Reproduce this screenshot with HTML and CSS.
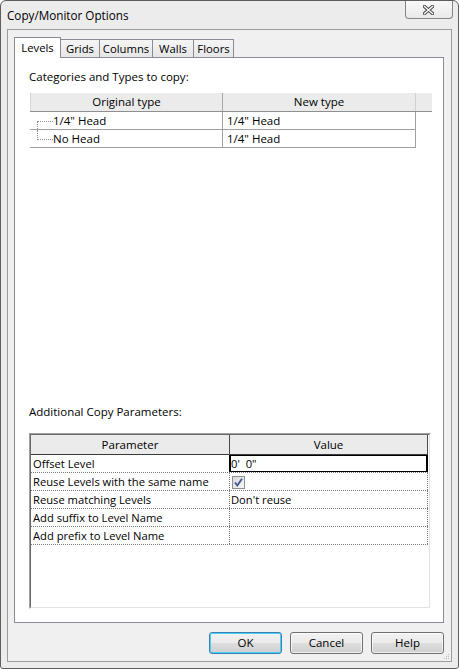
FILE: index.html
```html
<!DOCTYPE html>
<html>
<head>
<meta charset="utf-8">
<title>Copy/Monitor Options</title>
<link rel="stylesheet" href="styles.css">
</head>
<body>
<div class="window">
  <div class="titlebar">
    <span class="title">Copy/Monitor Options</span>
    <div class="close-btn">
      <svg width="11" height="10" viewBox="0 0 11 10">
        <path d="M1.5 1.5 L9.5 8.5 M9.5 1.5 L1.5 8.5" stroke="#4b4b4b" stroke-width="3.4" stroke-linecap="square" fill="none"/>
        <path d="M1.5 1.5 L9.5 8.5 M9.5 1.5 L1.5 8.5" stroke="#ffffff" stroke-width="1.3" stroke-linecap="square" fill="none"/>
      </svg>
    </div>
  </div>
  <div class="client">
    <div class="tabs">
      <div class="tab selected t-levels">Levels</div>
      <div class="tab t-grids">Grids</div>
      <div class="tab t-columns">Columns</div>
      <div class="tab t-walls">Walls</div>
      <div class="tab t-floors">Floors</div>
    </div>
    <div class="panel">
      <div class="label">Categories and Types to copy:</div>
      <div class="types">
        <div class="types-head">
          <div class="th th-orig">Original type</div>
          <div class="th th-new">New type</div>
          <div class="th th-fill"></div>
        </div>
        <div class="types-row">
          <div class="td td-orig"><span class="twig twig-first"></span><span class="tname">1/4" Head</span></div>
          <div class="td td-new">1/4" Head</div>
        </div>
        <div class="types-row">
          <div class="td td-orig"><span class="twig twig-last"></span><span class="tname">No Head</span></div>
          <div class="td td-new">1/4" Head</div>
        </div>
      </div>
      <div class="spacer"></div>
      <div class="label">Additional Copy Parameters:</div>
      <div class="grid">
        <div class="grid-inner">
          <div class="g-head">
            <div class="gh gh-param">Parameter</div>
            <div class="gh gh-value">Value</div>
          </div>
          <div class="g-row">
            <div class="gc gc-param focus-left">Offset Level</div>
            <div class="gc gc-value focus">0'&nbsp; 0"</div>
          </div>
          <div class="g-row">
            <div class="gc gc-param">Reuse Levels with the same name</div>
            <div class="gc gc-value">
              <span class="checkbox">
                <svg width="11" height="11" viewBox="0 0 11 11">
                  <path d="M2 5.5 L4.3 8.5 L9 1.8" stroke="#41558f" stroke-width="1.8" fill="none" stroke-linejoin="miter"/>
                </svg>
              </span>
            </div>
          </div>
          <div class="g-row">
            <div class="gc gc-param">Reuse matching Levels</div>
            <div class="gc gc-value">Don't reuse</div>
          </div>
          <div class="g-row">
            <div class="gc gc-param">Add suffix to Level Name</div>
            <div class="gc gc-value"></div>
          </div>
          <div class="g-row">
            <div class="gc gc-param">Add prefix to Level Name</div>
            <div class="gc gc-value"></div>
          </div>
        </div>
      </div>
    </div>
    <div class="buttons">
      <div class="btn btn-default">OK</div>
      <div class="btn">Cancel</div>
      <div class="btn">Help</div>
    </div>
    <svg class="grip" width="7" height="7" viewBox="0 0 7 7">
      <rect x="5" y="1" width="1" height="1" fill="#b9b9b9"/>
      <rect x="3" y="3" width="1" height="1" fill="#b9b9b9"/>
      <rect x="5" y="3" width="1" height="1" fill="#b9b9b9"/>
      <rect x="1" y="5" width="1" height="1" fill="#b9b9b9"/>
      <rect x="3" y="5" width="1" height="1" fill="#b9b9b9"/>
      <rect x="5" y="5" width="1" height="1" fill="#b9b9b9"/>
    </svg>
  </div>
</div>
</body>
</html>
```
FILE: styles.css
```css
* { box-sizing: border-box; }
html, body { margin: 0; padding: 0; }
body {
  width: 459px;
  height: 669px;
  overflow: hidden;
  background: #ffffff;
  font-family: "Open Sans", "Noto Sans", sans-serif;
  font-size: 11.5px;
  color: #000;
}
.window {
  width: 459px;
  height: 669px;
  border: 1px solid #5e5e5e;
  border-radius: 6px 6px 3px 3px;
  background: #ececec;
  display: flex;
  flex-direction: column;
}
.titlebar {
  height: 28px;
  flex: none;
  display: flex;
  align-items: flex-start;
}
.title {
  padding-left: 6px;
  margin-top: 6px;
  line-height: 16px;
  font-size: 11.7px;
}
.close-btn {
  margin-left: auto;
  margin-right: 5px;
  width: 48px;
  height: 18px;
  border: 1px solid #858585;
  border-top: none;
  border-radius: 0 0 4px 4px;
  background: linear-gradient(#f9f9f9, #e9e9e9);
  display: flex;
  align-items: center;
  justify-content: center;
  padding-right: 2px;
}
.client {
  flex: 1;
  margin: 0 6px 6px 6px;
  border: 1px solid #9c9c9c;
  background: #f0f0f0;
  padding: 7px 7px 7px 6px;
  display: flex;
  flex-direction: column;
  position: relative;
}
.tabs {
  display: flex;
  align-items: flex-end;
  height: 20px;
  flex: none;
}
.tab {
  height: 18px;
  border: 1px solid #898c95;
  border-bottom: none;
  background: linear-gradient(#f5f5f5, #e6e6e6);
  text-align: center;
  line-height: 17px;
  padding-top: 0;
  margin-left: -1px;
  font-size: 11.3px;
}
.tab.selected {
  height: 21px;
  margin-left: 0;
  margin-bottom: -1px;
  background: #ffffff;
  position: relative;
  z-index: 1;
  line-height: 16px;
  padding-top: 2px;
}
.t-levels { width: 47px; }
.t-grids { width: 40px; }
.t-columns { width: 54px; }
.t-walls { width: 42px; }
.t-floors { width: 41px; }
.panel {
  flex: 1;
  border: 1px solid #898c95;
  background: #ffffff;
  display: flex;
  flex-direction: column;
  padding: 11px 0 13px 14px;
}
.label {
  line-height: 16px;
  height: 16px;
}
.types {
  margin-top: 8px;
  margin-left: 1px;
  width: 402px;
}
.types-head {
  display: flex;
  height: 19px;
  border-bottom: 1px solid #8f8f8f;
  background: #ebebeb;
}
.th {
  line-height: 18px;
  text-align: center;
}
.th-orig {
  width: 193px;
  border-left: 1px solid #d9d9d9;
  border-right: 1px solid #a8a8a8;
}
.th-new {
  width: 193px;
  border-right: 1px solid #d0d0d0;
}
.th-fill { width: 16px; }
.types-row {
  display: flex;
  width: 386px;
  height: 18px;
  border-bottom: 1px solid #a0a0a0;
}
.td {
  height: 17px;
  line-height: 17px;
}
.td-orig {
  width: 193px;
  border-right: 1px solid #a0a0a0;
  display: flex;
  align-items: flex-start;
}
.td-new {
  width: 193px;
  border-right: 1px solid #a0a0a0;
  padding-left: 4px;
}
.twig {
  display: block;
  margin-left: 7px;
  width: 16px;
  flex: none;
}
.twig-first {
  margin-top: 9px;
  height: 8px;
  border-left: 1px dotted #8c8c8c;
  border-top: 1px dotted #8c8c8c;
}
.twig-last {
  height: 10px;
  border-left: 1px dotted #8c8c8c;
  border-bottom: 1px dotted #8c8c8c;
}
.tname { margin-left: 0; }
.spacer { flex: 1; }
.grid {
  margin-top: 13px;
  width: 402px;
  height: 176px;
  border: 1px solid;
  border-color: #a0a0a0 #ffffff #ffffff #a0a0a0;
}
.grid-inner {
  height: 100%;
  border: 1px solid;
  border-color: #696969 #e3e3e3 #e3e3e3 #696969;
  background: #ffffff;
}
.g-head {
  display: flex;
  height: 20px;
}
.gh {
  height: 20px;
  line-height: 19px;
  text-align: center;
  background: #ebebeb;
  border-bottom: 1px solid #3a3a3a;
  border-right: 1px solid #4a4a4a;
}
.gh-param { width: 199px; }
.gh-value { width: 198px; }
.g-row {
  display: flex;
  width: 397px;
  height: 18px;
  border-bottom: 1px dotted #7a7a7a;
}
.gc {
  height: 17px;
  line-height: 17px;
  font-size: 11.2px;
  white-space: nowrap;
  border-right: 1px dotted #7a7a7a;
}
.gc-param { width: 199px; padding-left: 2px; }
.gc-value { width: 198px; padding-left: 1px; }
.gc.focus-left { border-right: 1px solid #000; }
.gc.focus {
  border-right: 1px solid #000;
  box-shadow: inset 1px 1px 0 #000, inset -1px -1px 0 #000;
}
.checkbox {
  display: block;
  margin: 3px 0 0 1px;
  width: 13px;
  height: 13px;
  border: 1px solid #8e8f8f;
  background: linear-gradient(135deg, #d8d8d8, #f7f7f7);
  padding: 0;
}
.checkbox svg { display: block; }
.buttons {
  display: flex;
  justify-content: flex-end;
  gap: 8px;
  margin-top: 9px;
  flex: none;
}
.btn {
  width: 73px;
  height: 22px;
  border: 1px solid #707070;
  border-radius: 3px;
  background: linear-gradient(#f2f2f2 0%, #ebebeb 48%, #dddddd 52%, #cfcfcf 100%);
  box-shadow: inset 0 0 0 1px rgba(255,255,255,0.7);
  text-align: center;
  line-height: 20px;
}
.btn-default {
  border-color: #3c7fb1;
  box-shadow: inset 0 0 0 1px #48d0f6;
}
.grip {
  position: absolute;
  right: 1px;
  bottom: 1px;
}
```
